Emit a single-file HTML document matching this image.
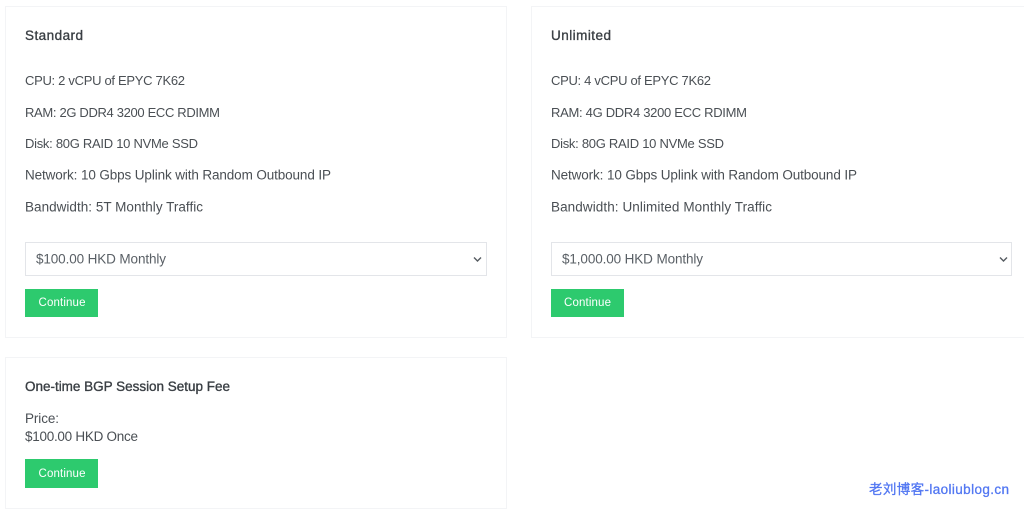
<!DOCTYPE html>
<html lang="en">
<head>
<meta charset="utf-8">
<title>Plans</title>
<style>
html,body{margin:0;padding:0;background:#fff;width:1024px;height:512px;overflow:hidden}
svg{display:block;position:absolute;left:0;top:0}
text{font-family:"Liberation Sans","Noto Sans CJK SC",sans-serif;font-size:13px;fill:#4a4f54}
.l{font-size:13.5px}
.t{font-size:13.5px;fill:#3a3f44;stroke:#3a3f44;stroke-width:.35px}
.s{fill:#5a6066;font-size:13.5px}
.b{fill:#fff;font-size:11.5px}
.w{fill:#5277f2;font-size:13.5px;stroke:#5277f2;stroke-width:.3px}
</style>
</head>
<body>
<svg width="1024" height="512" viewBox="0 0 1024 512" xmlns="http://www.w3.org/2000/svg">
<g fill="#fff" stroke="#f3f4f6" stroke-width="1">
<rect x="5.500" y="6.500" width="501" height="331"/>
<rect x="531.500" y="6.500" width="500" height="331"/>
<rect x="5.500" y="357.500" width="501" height="151"/>
</g>
<g fill="#fff" stroke="#e3e5e9" stroke-width="1">
<rect x="25.500" y="242.500" width="461" height="33"/>
<rect x="551.500" y="242.500" width="460" height="33"/>
</g>
<g fill="#2dca6e">
<rect x="25" y="289" width="73" height="28"/>
<rect x="551" y="289" width="73" height="28"/>
<rect x="25" y="459" width="73" height="29"/>
</g>
<g fill="none" stroke="#555b61" stroke-width="1.400">
<path d="M474 257.500l3.500 3.500 3.500-3.500"/>
<path d="M1000 257.500l3.500 3.500 3.500-3.500"/>
</g>

<text class="t" x="25" y="40" textLength="58" lengthAdjust="spacing">Standard</text>
<text x="25" y="85" textLength="160" lengthAdjust="spacing">CPU: 2 vCPU of EPYC 7K62</text>
<text x="25" y="117" textLength="195" lengthAdjust="spacing">RAM: 2G DDR4 3200 ECC RDIMM</text>
<text x="25" y="148" textLength="173" lengthAdjust="spacing">Disk: 80G RAID 10 NVMe SSD</text>
<text class="l" x="25" y="179.500" textLength="306" lengthAdjust="spacing">Network: 10 Gbps Uplink with Random Outbound IP</text>
<text class="l" x="25" y="211.500" textLength="178" lengthAdjust="spacing">Bandwidth: 5T Monthly Traffic</text>
<text class="s" x="36" y="263.500" textLength="130" lengthAdjust="spacing">$100.00 HKD Monthly</text>
<text class="b" x="38.500" y="306" textLength="47" lengthAdjust="spacing">Continue</text>

<text class="t" x="551" y="40" textLength="60" lengthAdjust="spacing">Unlimited</text>
<text x="551" y="85" textLength="160" lengthAdjust="spacing">CPU: 4 vCPU of EPYC 7K62</text>
<text x="551" y="117" textLength="196" lengthAdjust="spacing">RAM: 4G DDR4 3200 ECC RDIMM</text>
<text x="551" y="148" textLength="173" lengthAdjust="spacing">Disk: 80G RAID 10 NVMe SSD</text>
<text class="l" x="551" y="179.500" textLength="306" lengthAdjust="spacing">Network: 10 Gbps Uplink with Random Outbound IP</text>
<text class="l" x="551" y="211.500" textLength="221" lengthAdjust="spacing">Bandwidth: Unlimited Monthly Traffic</text>
<text class="s" x="562" y="263.500" textLength="141" lengthAdjust="spacing">$1,000.00 HKD Monthly</text>
<text class="b" x="564" y="306" textLength="47" lengthAdjust="spacing">Continue</text>

<text class="t" x="25" y="391" textLength="205" lengthAdjust="spacing">One-time BGP Session Setup Fee</text>
<text class="l" x="25" y="423" textLength="34" lengthAdjust="spacing">Price:</text>
<text class="l" x="25" y="441" textLength="113" lengthAdjust="spacing">$100.00 HKD Once</text>
<text class="b" x="38.500" y="477" textLength="47" lengthAdjust="spacing">Continue</text>

<text class="w" x="869" y="494" textLength="140" lengthAdjust="spacing">老刘博客-laoliublog.cn</text>
</svg>
</body>
</html>
